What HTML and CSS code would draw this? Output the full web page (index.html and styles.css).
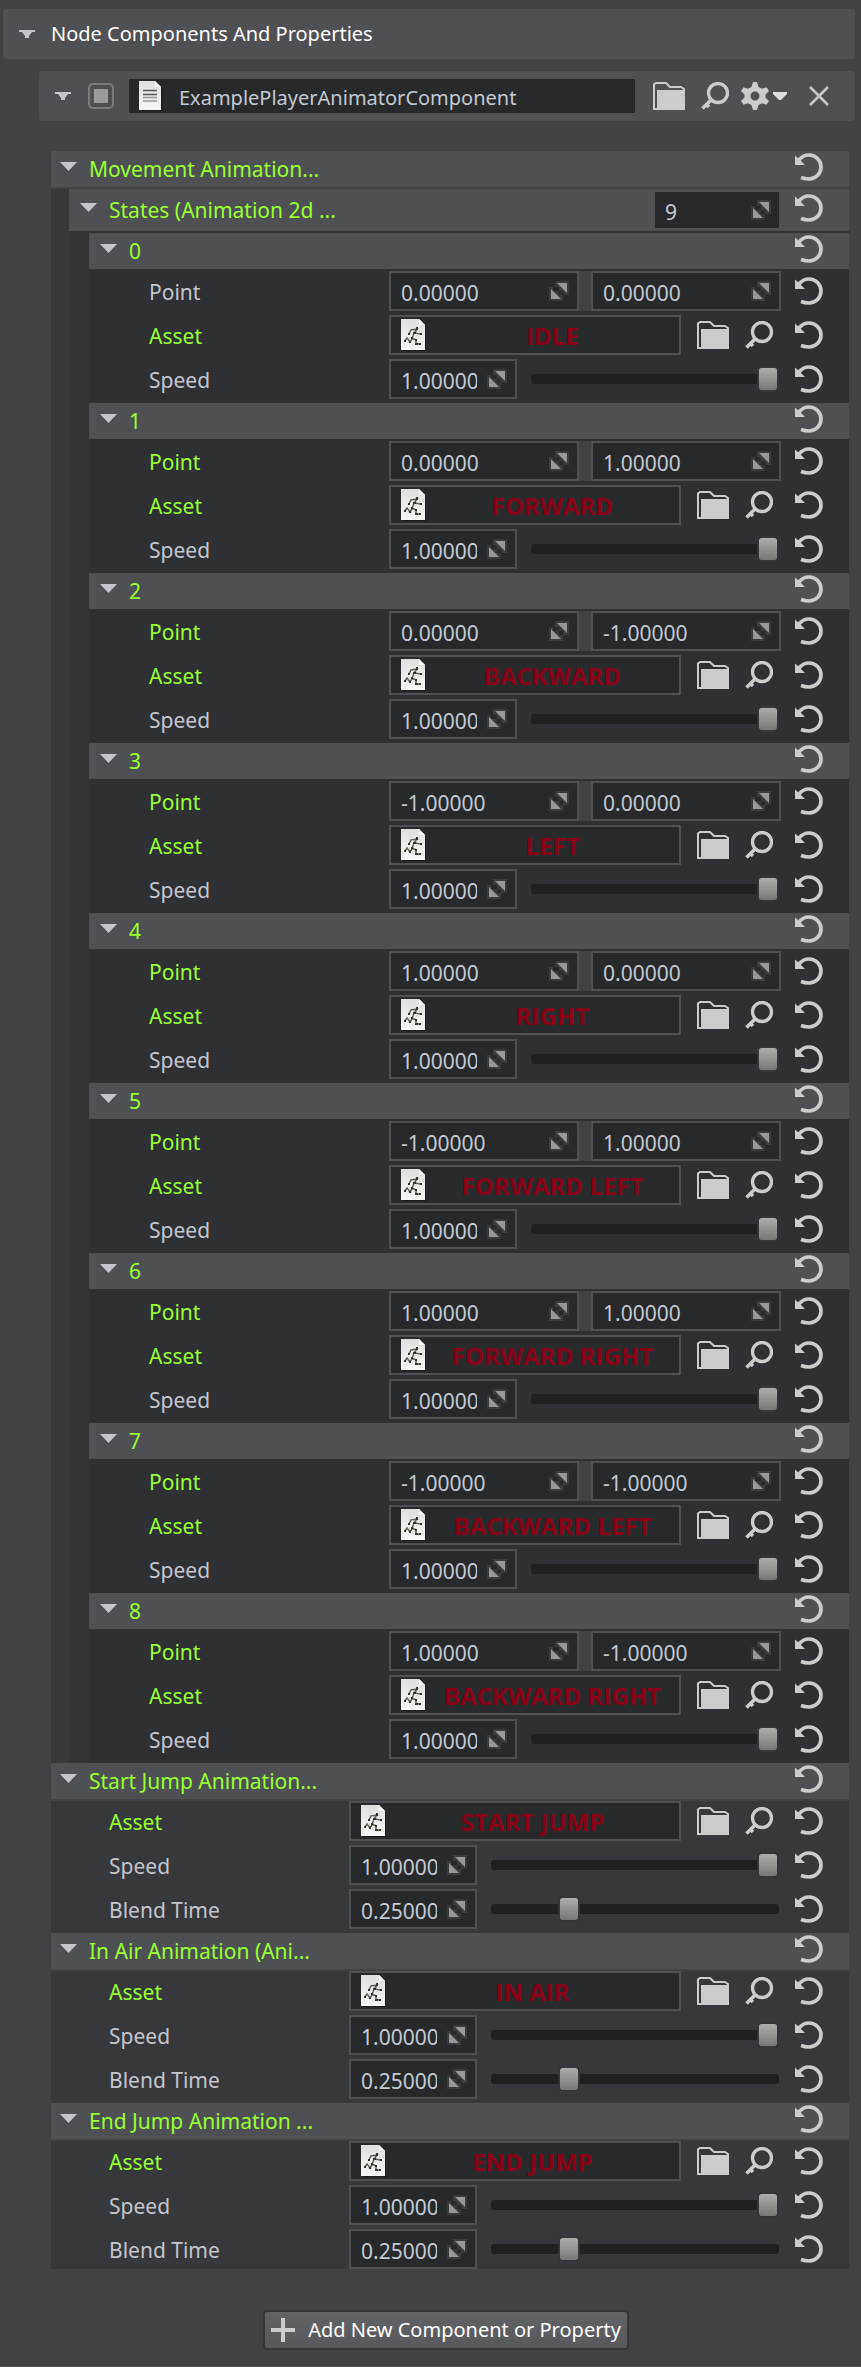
FILE: index.html
```html
<!DOCTYPE html>
<html lang="en">
<head>
<meta charset="utf-8">
<title>Node Components And Properties</title>
<link rel="stylesheet" href="styles.css">
</head>
<body>
<svg class="sprite" aria-hidden="true">
  <defs>
    <linearGradient id="paper" x1="0" y1="0" x2="0" y2="1">
      <stop offset="0" stop-color="#dedede"/><stop offset="1" stop-color="#f8f8f8"/>
    </linearGradient>
  </defs>
  <symbol id="caret" viewBox="0 0 17 9"><path d="M0 0H17L8.5 9Z" fill="#c3c5cd"/></symbol>
  <symbol id="caret-bar" viewBox="0 0 16 8"><path d="M0 0H16V2H13L10 6V8H6V6L3 2H0Z" fill="#c3c5cd"/></symbol>
  <symbol id="reset" viewBox="0 0 28 28">
    <path d="M4 7C7 3.200 10 2 14 2A12 12 0 0 1 14 26C11 26 9 25.600 6 24.500" fill="none" stroke="#ccc" stroke-width="3.700"/>
    <path d="M0 2.500L4 6L9.500 11.500V12H0Z" fill="#ccc"/>
  </symbol>
  <symbol id="folder" viewBox="0 0 32 28">
    <path d="M1 28V2.500L3 1H13L17 5H28L31 7V8M0 27H8" fill="none" stroke="#ccc" stroke-width="2"/>
    <path d="M4 8H32V28H4Z" fill="#ccc"/>
  </symbol>
  <symbol id="search" viewBox="0 0 28 28">
    <circle cx="17" cy="11" r="9.500" fill="none" stroke="#ccc" stroke-width="3.300"/>
    <path d="M10.500 17.500L1.500 26.500M5 22L8 25" fill="none" stroke="#ccc" stroke-width="3.500"/>
  </symbol>
  <symbol id="gear" viewBox="0 0 28 28">
    <path fill="#ccc" fill-rule="evenodd" d="M12 0H16L17.500 5L21 6.800L25.500 5.300L28 9L24.500 12.500V15.500L28 19L25.500 22.700L21 21.200L17.500 23L16 28H12L10.500 23L7 21.200L2.500 22.700L0 19L3.500 15.500V12.500L0 9L2.500 5.300L7 6.800L10.500 5ZM14 9.500A4.500 4.500 0 1 0 14 18.500A4.500 4.500 0 1 0 14 9.500Z"/>
  </symbol>
  <symbol id="menu-caret" viewBox="0 0 14 8"><path d="M0 0H14V2L8 8H6L0 2Z" fill="#ddd"/></symbol>
  <symbol id="close" viewBox="0 0 20 20"><path d="M1 1L19 19M19 1L1 19" stroke="#c8c8c8" stroke-width="2.500"/></symbol>
  <symbol id="plus" viewBox="0 0 24 24"><path d="M12 0V24M0 12H24" stroke="#ccc" stroke-width="4"/></symbol>
  <symbol id="spin" viewBox="0 0 20 20">
    <path d="M6 0H20V14H14V10H10V6H6ZM0 6H4V10H10V14H14V20H0Z" fill="#3a3b3d"/>
    <path d="M8 2H18V12Z" fill="#989898"/><path d="M2 8V18H12Z" fill="#989898"/>
  </symbol>
  <symbol id="doc" viewBox="0 0 24 30">
    <path d="M2 2H18L24 8V30H2Z" fill="#111" opacity=".5"/>
    <path d="M0 0H16L22 6V29H0Z" fill="url(#paper)"/><path d="M16 0V6H22Z" fill="#fff"/>
    <path d="M4 9.500H18M4 13.500H18" stroke="#555" stroke-width="1.500"/>
    <path d="M4 16.500H18M4 20H18" stroke="#999" stroke-width="1.500"/>
  </symbol>
  <symbol id="anim" viewBox="0 0 25 32">
    <path d="M2 2H19L25 8V32H2Z" fill="#111" opacity=".5"/>
    <path d="M0 0H18L24 6V31H0Z" fill="url(#paper)"/><path d="M18 0V6H24Z" fill="#fff"/>
    <path d="M8 15L10 11L16 10L13 14L11 20L9 23L6 19L4 22M14 14L19 15M11 19L15 21L15 25H19" fill="none" stroke="#5d6152" stroke-width="1.500"/>
    <path d="M15 8h2v3h-2zM7 14h2v2H7zM3 21h2v2H3zM8 22h2v2H8zM14 20h2v2h-2zM14 24h3v2h-3zM18 24h2v2h-2zM19 14h2v2h-2zM12 13h3v2h-3zM10 18h2v2h-2z" fill="#33362c"/>
  </symbol>
</svg>

<main class="inspector">
  <header class="bar bar-title">
    <button class="icon-button" type="button" aria-label="Collapse panel"><svg class="caret-bar"><use href="#caret-bar"/></svg></button>
    <h1 class="title">Node Components And Properties</h1>
  </header>

  <section class="component">
    <div class="bar bar-component">
      <button class="icon-button" type="button" aria-label="Collapse component"><svg class="caret-bar"><use href="#caret-bar"/></svg></button>
      <input class="enabled" type="checkbox" checked aria-label="Component enabled">
      <label class="name-field">
        <svg class="doc"><use href="#doc"/></svg>
        <input class="text" type="text" value="ExamplePlayerAnimatorComponent" aria-label="Component script">
      </label>
      <div class="tools">
        <button class="icon-button" type="button" aria-label="Browse"><svg class="folder"><use href="#folder"/></svg></button>
        <button class="icon-button" type="button" aria-label="Find"><svg class="search"><use href="#search"/></svg></button>
        <button class="icon-button settings" type="button" aria-label="Settings"><svg class="gear"><use href="#gear"/></svg><svg class="menu-caret"><use href="#menu-caret"/></svg></button>
        <button class="icon-button close-button" type="button" aria-label="Remove"><svg class="close"><use href="#close"/></svg></button>
      </div>
    </div>
    <div class="tree" id="tree"></div>
  </section>

  <footer class="footer">
    <button class="add-button" type="button"><svg class="plus"><use href="#plus"/></svg>Add New Component or Property</button>
  </footer>
</main>
<script src="app.js"></script>
</body>
</html>
```
FILE: styles.css
```css
* {
  box-sizing: border-box;
}

body {
  margin: 0;
  background: #414245;
  color: #c3c5cd;
  font: 20px/28px "Noto Sans", Tahoma, sans-serif;
}

input,
button {
  font: inherit;
  color: inherit;
}

svg {
  display: block;
  flex: none;
}

.sprite {
  position: absolute;
  width: 0;
  height: 0;
}

.icon-button {
  display: flex;
  flex: none;
  padding: 0;
  border: 0;
  background: none;
}

.caret { width: 17px; height: 9px; }
.caret-bar { width: 16px; height: 8px; }
.reset, .search, .gear { width: 28px; height: 28px; }
.folder { width: 32px; height: 28px; }
.menu-caret { width: 14px; height: 8px; }
.close, .spin { width: 20px; height: 20px; }
.plus { width: 24px; height: 24px; }
.doc { width: 24px; height: 30px; }
.anim { width: 25px; height: 32px; }

.inspector {
  padding: 9px 6px 16px 3px;
  border-bottom: 1px solid #4f5053;
}

.bar {
  display: flex;
  align-items: center;
  height: 50px;
  border-radius: 4px;
  background: #4f5053;
}

.bar-title {
  gap: 16px;
  padding: 0 16px;
}

.title {
  margin: 0;
  color: #fff;
  font-size: 20px;
  font-weight: 400;
}

.component {
  margin: 12px 0 0 36px;
}

.bar-component {
  padding: 0 26px 0 16px;
}

.enabled {
  appearance: none;
  width: 26px;
  height: 26px;
  margin: 0 15px 0 17px;
  padding: 4px;
  border: 2px solid #7b7b7c;
  border-radius: 5px;
}

.enabled:checked {
  background: #9d9b9c content-box;
}

.name-field {
  display: flex;
  flex: 1;
  align-items: center;
  gap: 16px;
  min-width: 0;
  height: 34px;
  padding-left: 10px;
  background: #28292b;
}

.text {
  flex: 1;
  width: 0;
  min-width: 0;
  height: 100%;
  padding: 3px 0 0;
  border: 0;
  outline: 0;
  background: none;
  color: #c3c9d3;
}

.tools {
  display: flex;
  align-items: center;
  gap: 16px;
  margin-left: 18px;
}

.settings {
  align-items: center;
  gap: 4px;
  margin-left: -4px;
}

.close-button {
  margin-left: 6px;
}

.tree {
  margin: 30px 6px 0 12px;
  background: #37383b;
  font-size: 21px;
}

.head {
  display: flex;
  align-items: center;
  height: 36px;
  margin-bottom: 2px;
  padding: 0 26px 0 9px;
  background: #4f5053;
  color: #99ff33;
}

.head .caret {
  margin: 0 12px 6px 0;
}

.head .icon-button:last-child {
  margin-left: 16px;
  padding-bottom: 4px;
}

.head-tall {
  height: 42px;
  padding-left: 11px;
}

.head-top {
  box-shadow: 0 2px #414245;
}

.head-item {
  padding-left: 11px;
}

.head-label {
  flex: 1;
  margin: 0;
  font-size: 21px;
  font-weight: 400;
}

.states {
  margin-left: 18px;
  background: #333438;
}

.items {
  margin-left: 20px;
  background: #2f3033;
}

.rows {
  display: grid;
  grid-template-columns: minmax(0, 1fr);
  gap: 4px;
  padding-bottom: 4px;
}

.tree > .group:last-child .rows {
  padding-bottom: 0;
}

.row {
  display: flex;
  align-items: center;
  height: 40px;
  padding-right: 26px;
}

.label {
  flex: none;
  width: 298px;
  padding: 2px 0 0 58px;
}

.items .label {
  width: 300px;
  padding-left: 60px;
}

.changed {
  color: #99ff33;
}

.value {
  display: flex;
  flex: 1;
  align-items: center;
  min-width: 0;
  margin-right: 14px;
}

.field {
  display: flex;
  flex: 1;
  align-items: center;
  gap: 10px;
  min-width: 0;
  height: 40px;
  padding: 0 8px 0 10px;
  border: 2px solid #4f5053;
  background: #28292b;
}

.field-count {
  flex: none;
  width: 124px;
  height: 36px;
  border: 0;
}

.field-scalar {
  flex: none;
  width: 128px;
}

.pair {
  gap: 12px;
  background: #414245;
}

.field-asset {
  gap: 0;
  padding-right: 0;
}

.field-asset .text {
  padding: 0;
  color: #880015;
  font: bold 24px/32px "Open Sans", "Segoe UI", sans-serif;
  text-align: center;
}

.asset-tools {
  display: flex;
  gap: 16px;
  margin: 0 8px 0 16px;
}

.slider {
  appearance: none;
  flex: 1;
  width: 0;
  min-width: 0;
  height: 10px;
  margin: 0 2px 0 14px;
  border-radius: 3px;
  background: #202020;
}

.slider::-webkit-slider-thumb {
  appearance: none;
  width: 22px;
  height: 26px;
  border: 2px solid #343536;
  border-radius: 4px;
  background: linear-gradient(#adadad, #777) padding-box;
}

.footer {
  display: flex;
  justify-content: center;
  margin-top: 41px;
  padding-left: 34px;
}

.add-button {
  display: flex;
  align-items: center;
  gap: 13px;
  height: 40px;
  padding: 0 6px;
  border: 2px solid #343537;
  border-radius: 4px;
  background: linear-gradient(#626366, #57585b);
  color: #fff;
}
```
FILE: app.js
```js
const icon = (name) => `<svg class="${name}"><use href="#${name}"/></svg>`;
const iconButton = (name, label) =>
  `<button class="icon-button" type="button" aria-label="${label}">${icon(name)}</button>`;
const reset = iconButton("reset", "Reset");

const field = (value, label, kind = "") =>
  `<label class="field ${kind}"><input class="text" type="text" value="${value}" aria-label="${label}">${icon("spin")}</label>`;

const row = (label, changed, kind, content) => `
  <div class="row">
    <span class="label ${changed ? "changed" : ""}">${label}</span>
    <div class="value ${kind}">${content}</div>${reset}
  </div>`;

const assetRow = (name) => row("Asset", true, "", `
  <label class="field field-asset">${icon("anim")}<input class="text" type="text" readonly value="${name}" aria-label="Asset"></label>
  <span class="asset-tools">${iconButton("folder", "Browse")}${iconButton("search", "Find")}</span>`);

const scalarRow = (label, value) => row(label, false, "",
  field(value.toFixed(5), label, "field-scalar") +
  `<input class="slider" type="range" min="0" max="1" step="0.01" value="${value}" aria-label="${label}">`);

const pointRow = (x, y) => row("Point", x !== 0 || y !== 0, "pair",
  field(x.toFixed(5), "Point x") + field(y.toFixed(5), "Point y"));

const head = (label, kind, extra = "") => `
  <div class="head ${kind}">${iconButton("caret", "Collapse")}<h2 class="head-label">${label}</h2>${extra}${reset}</div>`;

const states = [
  [0, 0, "IDLE"],
  [0, 1, "FORWARD"],
  [0, -1, "BACKWARD"],
  [-1, 0, "LEFT"],
  [1, 0, "RIGHT"],
  [-1, 1, "FORWARD LEFT"],
  [1, 1, "FORWARD RIGHT"],
  [-1, -1, "BACKWARD LEFT"],
  [1, -1, "BACKWARD RIGHT"],
];

const jumps = [
  ["Start Jump Animation...", "START JUMP"],
  ["In Air Animation (Ani...", "IN AIR"],
  ["End Jump Animation ...", "END JUMP"],
];

document.getElementById("tree").innerHTML = `
  <section class="group">
    ${head("Movement Animation...", "head-top")}
    <div class="states">
      ${head("States (Animation 2d ...", "head-tall", field(states.length, "State count", "field-count"))}
      <div class="items">
        ${states.map(([x, y, name], i) => head(i, "head-item") +
          `<div class="rows">${pointRow(x, y)}${assetRow(name)}${scalarRow("Speed", 1)}</div>`).join("")}
      </div>
    </div>
  </section>
  ${jumps.map(([label, name]) => `<section class="group">${head(label, "head-top")}
    <div class="rows">${assetRow(name)}${scalarRow("Speed", 1)}${scalarRow("Blend Time", 0.25)}</div></section>`).join("")}`;
```
